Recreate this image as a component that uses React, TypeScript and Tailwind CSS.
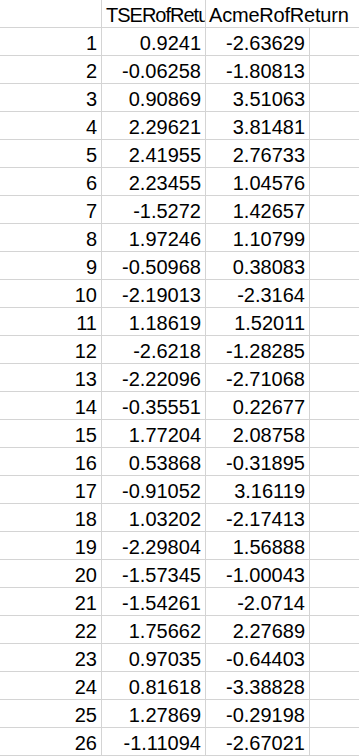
import React from "react";

const data: [number, string, string][] = [
  [1, "0.9241", "-2.63629"],
  [2, "-0.06258", "-1.80813"],
  [3, "0.90869", "3.51063"],
  [4, "2.29621", "3.81481"],
  [5, "2.41955", "2.76733"],
  [6, "2.23455", "1.04576"],
  [7, "-1.5272", "1.42657"],
  [8, "1.97246", "1.10799"],
  [9, "-0.50968", "0.38083"],
  [10, "-2.19013", "-2.3164"],
  [11, "1.18619", "1.52011"],
  [12, "-2.6218", "-1.28285"],
  [13, "-2.22096", "-2.71068"],
  [14, "-0.35551", "0.22677"],
  [15, "1.77204", "2.08758"],
  [16, "0.53868", "-0.31895"],
  [17, "-0.91052", "3.16119"],
  [18, "1.03202", "-2.17413"],
  [19, "-2.29804", "1.56888"],
  [20, "-1.57345", "-1.00043"],
  [21, "-1.54261", "-2.0714"],
  [22, "1.75662", "2.27689"],
  [23, "0.97035", "-0.64403"],
  [24, "0.81618", "-3.38828"],
  [25, "1.27869", "-0.29198"],
  [26, "-1.11094", "-2.67021"],
];

export default function App() {
  return (
    <div
      className="w-[359px] h-[756px] overflow-hidden bg-white text-black"
      style={{ fontFamily: '"Liberation Sans", Arial, sans-serif' }}
    >
      <div className="flex h-[28px] border-b border-[#d4d4d4] text-[20px] leading-none">
        <div className="w-[102px] shrink-0 border-r border-[#d4d4d4]" />
        <div className="w-[104px] shrink-0 border-r border-[#d4d4d4] overflow-hidden whitespace-nowrap pl-[4px] flex items-end pb-[2px] tracking-[-1px]">
          TSERofReturn
        </div>
        <div className="w-[104px] shrink-0 whitespace-nowrap pl-[3px] flex items-end pb-[2px] tracking-[-0.2px]">
          AcmeRofReturn
        </div>
        <div className="flex-1" />
      </div>
      {data.map(([n, a, b]) => (
        <div key={n} className="flex h-[28px] border-b border-[#d4d4d4] text-[20px] leading-none">
          <div className="w-[102px] shrink-0 border-r border-[#d4d4d4] flex items-end justify-end pr-[4px] pb-[2px]">
            {n}
          </div>
          <div className="w-[104px] shrink-0 border-r border-[#d4d4d4] flex items-end justify-end pr-[4px] pb-[2px] whitespace-nowrap">
            {a}
          </div>
          <div className="w-[104px] shrink-0 border-r border-[#d4d4d4] flex items-end justify-end pr-[4px] pb-[2px] whitespace-nowrap">
            {b}
          </div>
          <div className="flex-1" />
        </div>
      ))}
    </div>
  );
}
